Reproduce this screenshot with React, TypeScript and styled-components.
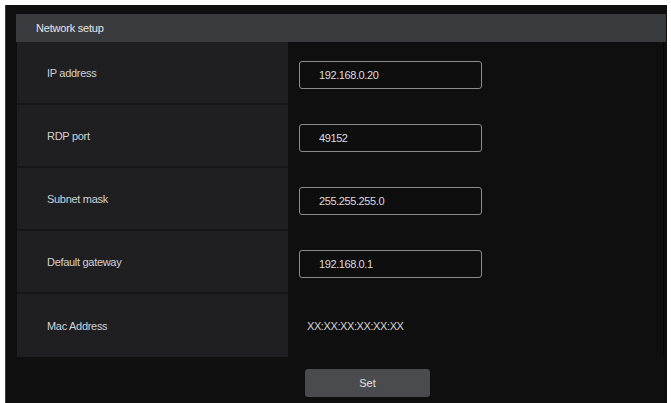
import React from 'react'
import styled, { createGlobalStyle } from 'styled-components'

const GlobalStyle = createGlobalStyle`
  html, body {
    margin: 0;
    padding: 0;
    background: #ffffff;
  }

  body {
    font-family: "Liberation Sans", Arial, sans-serif;
  }
`

const Page = styled.div`
  width: 671px;
  height: 403px;
  padding: 5px 4px 0 5px;
  box-sizing: border-box;
`

const Frame = styled.div`
  height: 100%;
  box-sizing: border-box;
  padding: 9px 1px 0 10px;
  background: #0f0f10;
  border-left: 1px solid #3a3a3c;
`

const Header = styled.div`
  display: flex;
  align-items: center;
  height: 28px;
  padding-left: 20px;
  background: #3a3b3f;
  color: #e6e6e8;
  font-size: 11px;
  letter-spacing: -0.2px;
`

const Table = styled.div`
  display: grid;
  grid-template-columns: 271px 1fr;
  grid-auto-rows: 63px;
  margin-left: 1px;
  margin-right: 2px;
  border-right: 1px solid #060607;
`

const Label = styled.div<{ $last?: boolean }>`
  display: flex;
  align-items: center;
  padding-left: 30px;
  background: #1f1f22;
  border-bottom: ${({ $last }) => ($last ? 'none' : '2px solid #151517')};
  color: #d2d2d4;
  font-size: 11px;
  letter-spacing: -0.3px;
`

const Value = styled.div`
  display: flex;
  align-items: center;
  padding-left: 11px;
`

const Field = styled.input`
  box-sizing: border-box;
  width: 183px;
  height: 28px;
  padding: 0 0 0 19px;
  margin: 3px 0 0;
  background: #0e0e0f;
  border: 1.5px solid #8c8c8e;
  border-radius: 3px;
  color: #dcdcde;
  font-family: "Liberation Sans", Arial, sans-serif;
  font-size: 11px;
  letter-spacing: -0.4px;
  outline: none;
`

const Plain = styled.span`
  padding-left: 8px;
  color: #d6d6d8;
  font-size: 11px;
  letter-spacing: -0.4px;
`

const Actions = styled.div`
  display: flex;
  padding: 12px 0 0 289px;
`

const SetButton = styled.button`
  width: 125px;
  height: 28px;
  border: none;
  border-radius: 3px;
  background: #4a4b4f;
  color: #e2e2e4;
  font-family: "Liberation Sans", Arial, sans-serif;
  font-size: 11px;
  cursor: pointer;
`

const rows: { label: string; value: string; editable: boolean }[] = [
  { label: 'IP address', value: '192.168.0.20', editable: true },
  { label: 'RDP port', value: '49152', editable: true },
  { label: 'Subnet mask', value: '255.255.255.0', editable: true },
  { label: 'Default gateway', value: '192.168.0.1', editable: true },
  { label: 'Mac Address', value: 'XX:XX:XX:XX:XX:XX', editable: false },
]

export default function App() {
  return (
    <>
      <GlobalStyle />
      <Page>
        <Frame>
          <Header>Network setup</Header>
          <Table>
            {rows.map((row, i) => (
              <React.Fragment key={row.label}>
                <Label $last={i === rows.length - 1}>{row.label}</Label>
                <Value>
                  {row.editable ? (
                    <Field defaultValue={row.value} />
                  ) : (
                    <Plain>{row.value}</Plain>
                  )}
                </Value>
              </React.Fragment>
            ))}
          </Table>
          <Actions>
            <SetButton type="button">Set</SetButton>
          </Actions>
        </Frame>
      </Page>
    </>
  )
}
